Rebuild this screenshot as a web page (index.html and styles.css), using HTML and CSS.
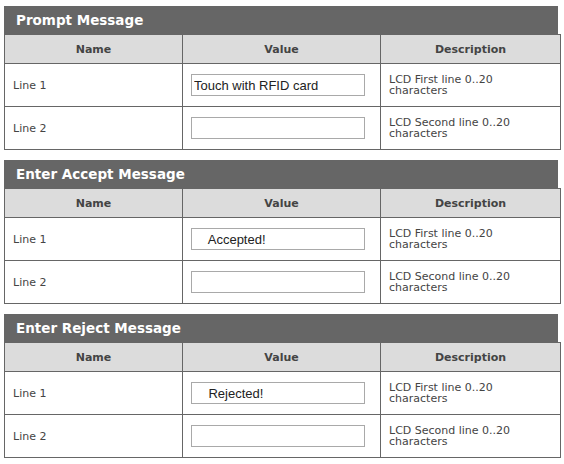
FILE: index.html
```html
<!DOCTYPE html>
<html>
<head>
<meta charset="utf-8">
<link rel="stylesheet" href="styles.css">
</head>
<body>
<div class="page">
  <div class="section">
    <div class="title">Prompt Message</div>
    <table class="grid">
      <tr><th class="c-name">Name</th><th class="c-value">Value</th><th class="c-desc">Description</th></tr>
      <tr><td class="name">Line 1</td><td class="value"><input class="field" type="text" value="Touch with RFID card"></td><td class="desc">LCD First line 0..20 characters</td></tr>
      <tr><td class="name">Line 2</td><td class="value"><input class="field" type="text" value=""></td><td class="desc">LCD Second line 0..20 characters</td></tr>
    </table>
  </div>
  <div class="section">
    <div class="title">Enter Accept Message</div>
    <table class="grid">
      <tr><th class="c-name">Name</th><th class="c-value">Value</th><th class="c-desc">Description</th></tr>
      <tr><td class="name">Line 1</td><td class="value"><input class="field" type="text" value="    Accepted!"></td><td class="desc">LCD First line 0..20 characters</td></tr>
      <tr><td class="name">Line 2</td><td class="value"><input class="field" type="text" value=""></td><td class="desc">LCD Second line 0..20 characters</td></tr>
    </table>
  </div>
  <div class="section">
    <div class="title">Enter Reject Message</div>
    <table class="grid">
      <tr><th class="c-name">Name</th><th class="c-value">Value</th><th class="c-desc">Description</th></tr>
      <tr><td class="name">Line 1</td><td class="value"><input class="field" type="text" value="    Rejected!"></td><td class="desc">LCD First line 0..20 characters</td></tr>
      <tr><td class="name">Line 2</td><td class="value"><input class="field" type="text" value=""></td><td class="desc">LCD Second line 0..20 characters</td></tr>
    </table>
  </div>
</div>
</body>
</html>
```
FILE: styles.css
```css
html, body {
  margin: 0;
  padding: 0;
  background: #ffffff;
}
.page {
  padding: 6px 0 0 4px;
  width: 554px;
  font-family: "DejaVu Sans", Verdana, sans-serif;
  font-size: 11px;
  color: #444444;
  display: flex;
  flex-direction: column;
  gap: 10px;
}
.section {
  display: flex;
  flex-direction: column;
}
.title {
  height: 28px;
  line-height: 28px;
  background: #666666;
  color: #ffffff;
  font-weight: bold;
  font-size: 13.5px;
  padding-left: 12px;
}
.grid {
  width: 554px;
  border-collapse: collapse;
  table-layout: fixed;
}
.grid th, .grid td {
  border: 1px solid #666666;
  padding: 0 8px;
  vertical-align: middle;
}
.grid th {
  background: #dcdcdc;
  height: 28px;
  font-weight: bold;
  text-align: center;
  color: #444444;
}
.grid td {
  height: 42px;
}
.c-name { width: 161px; }
.c-value { width: 181px; }
.c-desc { width: 163px; }
.desc {
  line-height: 11px;
  padding-left: 9px;
}
.name {
  padding-left: 8px;
}
.field {
  display: block;
  box-sizing: border-box;
  width: 174px;
  height: 22px;
  margin: 0;
  border: 1px solid #a9a9a9;
  padding: 0 2px;
  font-family: "Liberation Sans", Arial, sans-serif;
  font-size: 13px;
  color: #222222;
  background: #ffffff;
}
```
